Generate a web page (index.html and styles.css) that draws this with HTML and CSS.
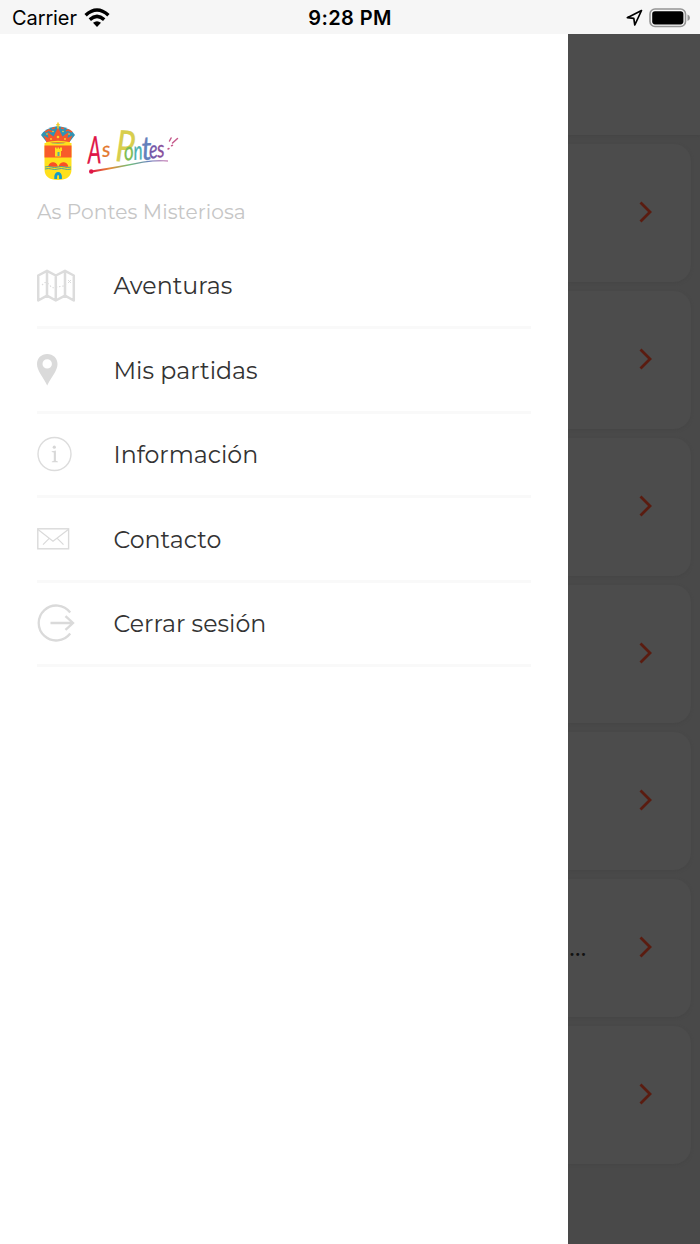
FILE: index.html
```html
<!DOCTYPE html>
<html lang="es">
<head>
<meta charset="utf-8">
<title>As Pontes Misteriosa</title>
<link rel="stylesheet" href="styles.css">
</head>
<body>
<header class="status">
  <div class="status-left"><span class="carrier">Carrier</span>
    <svg width="26" height="20" viewBox="0 0 26 20" fill="none" stroke="#000" stroke-width="3.5"><path d="M1.6 7.2Q13-3.2 24.4 7.2M5.8 11.6Q13 5.2 20.2 11.6"/><path d="M13 19L9 14.8Q13 11.8 17 14.8Z" fill="#000" stroke="none"/></svg>
  </div>
  <span class="clock">9:28 PM</span>
  <div class="status-right">
    <svg width="18" height="18" viewBox="0 0 18 18" fill="none" stroke="#000" stroke-width="1.7" stroke-linejoin="round"><path d="M15.500 1.500L1.300 8.700L7.800 9.400L8.800 16Z"/></svg>
    <svg width="42" height="20" viewBox="0 0 42 20"><rect x="1" y="1" width="35.5" height="17.5" rx="5" fill="none" stroke="#959595" stroke-width="1.6"/><rect x="3.2" y="3.2" width="31.2" height="13.2" rx="2.8"/><path d="M38.5 6.5Q41 7.5 41 9.8T38.5 13Z" fill="#959595"/></svg>
  </div>
</header>
<div class="screen">
  <aside class="drawer">
    <svg class="logo" width="160" height="75" viewBox="30 115 160 75">
      <g class="crest">
        <path d="M44.500 143h27v26q0 11-13.500 11t-13.500-11z" fill="#ffe01c"/>
        <path d="M44.500 145.500h27v12h-27z" fill="#f85b2a"/>
        <path d="M55 156.500v-9h1.500v1.300h1v-1.300h1.500v1.300h1v-1.300H62v3.500h-1v5.500z" fill="#ffe01c"/>
        <path d="M57.500 152h2v4h-2z" fill="#5ba9a5"/>
        <path d="M49 166a4.200 4.500 0 0 1 8 0zM59.500 166a4.200 4.500 0 0 1 8 0z" fill="#f85026" stroke="#f85026" stroke-width="1.300"/>
        <path d="M45 167q3.500-1 6.500 0t6.500 0t6.500 0t6.500 0M45 169q3.500-1 6.500 0t6.500 0t6.500 0t6.500 0" fill="none" stroke="#4aa39b" stroke-width="1"/>
        <path d="M55.700 179v-2.500a2.400 3 0 0 1 4.800 0v2.500" fill="none" stroke="#159bc8" stroke-width="2.800"/>
        <path d="M46.500 142L41 135Q45 128 58 126Q71 128 75 135L69.500 142Q58 145 46.500 142Z" fill="#2f93b5"/>
        <path d="M46.500 142l-3-6.500 5 2.500-1-6 6 4.500 4.500-9 4.500 9 6-4.500-1 6 5-2.500-3 6.500Q58 144 46.500 142Z" fill="#f4582d"/>
        <path d="M45 132l4-2 3 2M52 128.800l3-1M61 127.800l3 1M66 131l2-1 4 2" stroke="#f4582d" stroke-width="1.600" fill="none"/>
        <path d="M58 122.500v6M56.300 124.800h3.400" stroke="#f4cd25" stroke-width="1.500"/>
        <path d="M46 143Q58 140 70 143" stroke="#ffe01c" stroke-width="1.500" fill="none"/>
        <g fill="#ffd52a"><circle cx="47" cy="134" r=".8"/><circle cx="53" cy="131.500" r=".8"/><circle cx="63" cy="131.500" r=".8"/><circle cx="69" cy="134" r=".8"/><circle cx="58" cy="137" r="1.300"/><circle cx="51" cy="139" r=".9"/><circle cx="65" cy="139" r=".9"/></g>
      </g>
      <g class="wordmark">
        <text transform="translate(88 163.500) rotate(-1) scale(.56 1)" font-size="38" fill="#df1648" stroke="#df1648">A</text>
        <text transform="translate(102.500 157) rotate(-5)" font-size="21" fill="#e4782d" stroke="#e4782d">s</text>
        <text transform="translate(115 161) rotate(3) scale(.78 1)" font-size="43" fill="#d8ce4d" stroke="#d8ce4d">P</text>
        <text transform="translate(124.500 160.500) rotate(-4) scale(.72 1)" font-size="26" fill="#7dbd52" stroke="#7dbd52">o</text>
        <text transform="translate(134 160) rotate(-4) scale(.66 1)" font-size="26" fill="#49b0b1" stroke="#49b0b1">n</text>
        <text transform="translate(142 160) rotate(-3) scale(.88 1)" font-size="33" fill="#6480bb" stroke="#6480bb">t</text>
        <text transform="translate(149.500 158.500) rotate(-4) scale(.72 1)" font-size="25" fill="#7358a9" stroke="#7358a9">e</text>
        <text transform="translate(157.500 157.500) rotate(-4) scale(.78 1)" font-size="24" fill="#864f9c" stroke="#864f9c">s</text>
      </g>
      <defs><linearGradient id="rainbow"><stop stop-color="#df1648"/><stop offset=".25" stop-color="#e58b35"/><stop offset=".5" stop-color="#71bd7a"/><stop offset=".75" stop-color="#6a83bd"/><stop offset="1" stop-color="#b6559d"/></linearGradient></defs>
      <path d="M91 170.500Q120 166 143 161.500Q155 159.500 168 160.500V161.400Q155 161 143 162.700Q120 167.500 91 172.800Z" fill="url(#rainbow)"/><circle cx="91.200" cy="171.500" r="2.200" fill="#df1648"/>
      <path d="M169.500 141l1.600-3M172.500 143l5-4.500M171.500 145.800l1-.4M168 149l1-.5" stroke="#c65a8c" stroke-width="1.500" stroke-linecap="round"/>
    </svg>
    <div class="app-name">As Pontes Misteriosa</div>
    <nav>
      <a class="item"><span class="icon map"><svg width="40" height="34" viewBox="0 0 40 34" fill="none" stroke="#dcdcdc" stroke-width="2.500" stroke-linejoin="round"><path d="M1.200 6.500L10 1.800L18.800 6.500L28 1.800L36.800 6.500V31.500L28 26.700L18.800 31.500L10 26.700L1.200 31.500ZM10 2V27M18.800 6.500V31M28 2V27"/><path d="M5 16l3-2.500q3 0 5 3t5 2 6-1 6-4" stroke-width="1.100" stroke-dasharray="1.500 1.800"/><path d="M31 11l3 3m0-3l-3 3" stroke-width="1"/></svg></span><span class="label">Aventuras</span></a>
      <a class="item"><span class="icon"><svg width="21" height="33" viewBox="0 0 21 33"><path fill="#dadada" fill-rule="evenodd" d="M10.200 1C4.300 1 0 5.300 0 11c0 6.500 5.500 12 10.200 21.500C15 23 20.500 17.500 20.500 11c0-5.700-4.400-10-10.300-10Zm0 5.200a4.700 4.700 0 1 1 0 9.400a4.700 4.700 0 0 1 0-9.400Z"/></svg></span><span class="label">Mis partidas</span></a>
      <a class="item"><span class="icon"><svg width="36" height="36" viewBox="0 0 36 36"><circle cx="17.500" cy="18" r="16.500" fill="none" stroke="#dcdcdc" stroke-width="1.400"/><circle cx="17.300" cy="11.200" r="1.600" fill="#d6d6d6"/><path d="M14.700 15.300q2-.1 4.200-.8v10.300l2 .6v.9h-6.100v-.9l2-.6v-8.300l-2.100-.5z" fill="#d8d8d8"/></svg></span><span class="label">Información</span></a>
      <a class="item"><span class="icon"><svg width="33" height="24" viewBox="0 0 33 24" fill="none" stroke="#dadada"><rect x=".8" y="1.800" width="30.800" height="20" stroke-width="1.400"/><path d="M1 2.500L16 14.200L31.300 2.500M6 17.700L12 11.700M20.500 11.700L26.500 17.700" stroke-width="1.200"/></svg></span><span class="label">Contacto</span></a>
      <a class="item"><span class="icon"><svg width="38" height="38" viewBox="0 0 38 38" fill="none" stroke="#dadada" stroke-width="2.300"><path d="M33.200 8.500A17.500 17.500 0 1 0 33.200 29.500M13.500 19H35.500M28.500 12.200L36 19L28.500 25.800"/></svg></span><span class="label">Cerrar sesión</span></a>
    </nav>
  </aside>
  <main class="behind">
    <div class="topbar"></div>
    <div class="cards">
      <div class="card"><svg class="chev" viewBox="0 0 14 22"><path d="M1.500 1.500L11 11L1.500 20.500"/></svg></div>
      <div class="card"><svg class="chev" viewBox="0 0 14 22"><path d="M1.500 1.500L11 11L1.500 20.500"/></svg></div>
      <div class="card"><svg class="chev" viewBox="0 0 14 22"><path d="M1.500 1.500L11 11L1.500 20.500"/></svg></div>
      <div class="card"><svg class="chev" viewBox="0 0 14 22"><path d="M1.500 1.500L11 11L1.500 20.500"/></svg></div>
      <div class="card"><svg class="chev" viewBox="0 0 14 22"><path d="M1.500 1.500L11 11L1.500 20.500"/></svg></div>
      <div class="card"><span class="more">...</span><svg class="chev" viewBox="0 0 14 22"><path d="M1.500 1.500L11 11L1.500 20.500"/></svg></div>
      <div class="card"><svg class="chev" viewBox="0 0 14 22"><path d="M1.500 1.500L11 11L1.500 20.500"/></svg></div>
    </div>
  </main>
</div>
</body>
</html>
```
FILE: styles.css
```css
* { box-sizing: border-box; }
body { margin: 0; width: 700px; height: 1244px; overflow: hidden; background: #fff; font-family: Montserrat, Inter, sans-serif; }
svg { display: block; flex: none; }
.status { height: 34px; background: #f6f6f6; display: grid; grid-template-columns: 1fr auto 1fr; align-items: center; padding: 0 9px 0 12px; font-family: Inter, sans-serif; font-size: 20px; line-height: 34px; color: #000; }
.status-left { display: flex; align-items: center; gap: 8px; }
.clock { font-weight: 600; font-size: 20px; letter-spacing: .4px; margin-right: 3px; padding-top: 1px; }
.carrier { letter-spacing: -.1px; padding-top: 1px; }
.status-left svg { margin-left: -1px; }
.status-right { display: flex; justify-content: flex-end; align-items: center; gap: 5px; }
.screen { display: flex; height: 1210px; }
.drawer { width: 567.5px; flex: none; background: #fff; padding: 81px 37px 0; }
.logo { margin-left: -7px; }
.wordmark { font-family: Lato, sans-serif; font-style: italic; font-weight: 400; stroke-width: .3; }
.app-name { height: 42px; line-height: 43px; font-size: 20.2px; font-weight: 400; color: #c6c6c6; white-space: nowrap; letter-spacing: .06px; }
nav { padding-top: 12.6px; }
.item { display: flex; align-items: center; height: 84.5px; border-bottom: 3px solid #f9f9f9; }
.icon { width: 76.5px; flex: none; margin-top: -.5px; }
.map { margin-top: 1px; }
.label { font-size: 23.7px; line-height: 30px; padding-top: 1.6px; font-weight: 400; color: #333; white-space: nowrap; }
.behind { flex: 1; min-width: 0; overflow: hidden; background: #494949; }
.topbar { height: 101px; background: #4c4c4c; box-shadow: 0 1px 3px #444; }
.cards { padding: 9px 9px 0 0; display: flex; flex-direction: column; gap: 9px; }
.card { height: 138px; display: flex; align-items: center; justify-content: flex-end; padding-right: 38px; background: #4c4c4c; border-radius: 0 17px 17px 0; box-shadow: 0 1px 3px #464646; }
.chev { width: 14px; height: 22px; margin-top: -2.5px; fill: none; stroke: #5a1c10; stroke-width: 2.8; }
.more { margin-right: auto; padding: 2px 0 0 2px; color: #111; font-size: 22px; font-weight: 500; line-height: 24px; letter-spacing: .8px; }
```
